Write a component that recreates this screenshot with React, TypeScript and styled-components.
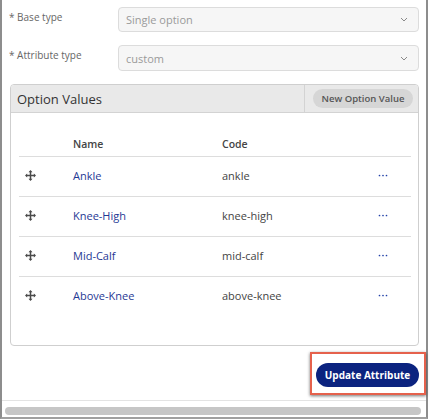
import React from "react";
import styled, { createGlobalStyle } from "styled-components";

const Global = createGlobalStyle`
  html, body { margin: 0; padding: 0; background: #fff; }
  body { font-family: "Open Sans", "Liberation Sans", sans-serif; }
  * { box-sizing: border-box; }
`;

const Frame = styled.div`
  width: 428px;
  height: 419px;
  border-left: 2px solid #8d8d8d;
  border-right: 2px solid #8d8d8d;
  border-bottom: 2px solid #a0a0a0;
  display: flex;
  flex-direction: column;
  background: #fff;
`;

const Content = styled.div`
  flex: 1;
  padding: 7px 7px 0 8px;
  display: flex;
  flex-direction: column;
`;

const FieldRow = styled.div<{ $gap?: number }>`
  display: grid;
  grid-template-columns: 108px 1fr;
  margin-bottom: ${(p) => p.$gap ?? 13}px;
`;

const Label = styled.div`
  font-size: 10px;
  color: #666;
  padding-top: 3px;
  margin-left: -1px;
`;

const SelectBox = styled.div<{ $h: number }>`
  height: ${(p) => p.$h}px;
  border: 1px solid #dcdcdc;
  border-radius: 4px;
  background: #f6f6f6;
  display: flex;
  align-items: center;
  justify-content: space-between;
  padding: 0 10px 0 7px;
  font-size: 11px;
  color: #9a9a9a;
`;

const Card = styled.div`
  border: 1px solid #cfcfcf;
  border-radius: 4px;
  height: 262px;
  display: flex;
  flex-direction: column;
  overflow: hidden;
`;

const CardHeader = styled.div`
  height: 28px;
  background: #e9e9e9;
  border-bottom: 1px solid #d3d3d3;
  display: flex;
  align-items: stretch;
`;

const CardTitle = styled.div`
  flex: 1;
  display: flex;
  align-items: center;
  padding-left: 6px;
  font-size: 13px;
  color: #333;
`;

const HeaderAction = styled.div`
  border-left: 1px solid #d3d3d3;
  display: flex;
  align-items: center;
  padding: 0 5px 0 8px;
`;

const Pill = styled.button`
  height: 19px;
  width: 100px;
  border: none;
  border-radius: 10px;
  background: #d6d6d6;
  color: #555;
  font-family: inherit;
  font-size: 9.5px;
  font-weight: 600;
  padding: 0;
  cursor: pointer;
`;

const CardBody = styled.div`
  padding: 15px 7px 0 8px;
`;

const TableRow = styled.div<{ $header?: boolean }>`
  display: grid;
  grid-template-columns: 54px 149px 156px 1fr;
  align-items: center;
  height: ${(p) => (p.$header ? 28 : 40)}px;
  padding-top: ${(p) => (p.$header ? 3 : 0)}px;
  padding-bottom: ${(p) => (p.$header ? 0 : 2)}px;
  border-top: ${(p) => (p.$header ? "none" : "1px solid #dddddd")};
  font-size: ${(p) => (p.$header ? 10.5 : 11)}px;
  font-weight: ${(p) => (p.$header ? 600 : 400)};
  color: #444;
`;

const HandleCell = styled.div`
  display: flex;
  justify-content: flex-start;
  padding-left: 6px;
`;

const NameCell = styled.div`
  color: #1f3994;
`;

const CodeCell = styled.div`
  color: #444;
`;

const MoreCell = styled.div`
  display: flex;
  align-items: center;
`;

const Footer = styled.div`
  display: flex;
  justify-content: flex-end;
  padding-top: 16px;
`;

const ButtonWrap = styled.div`
  position: relative;
`;

const Highlight = styled.div`
  position: absolute;
  top: -10px;
  left: -6px;
  right: -7px;
  bottom: -8px;
  border: 2px solid #e5614c;
  box-shadow: 0 1px 3px rgba(0, 0, 0, 0.55);
  pointer-events: none;
`;

const PrimaryButton = styled.button`
  height: 24px;
  width: 103px;
  border: none;
  border-radius: 12px;
  background: #0b237f;
  color: #fff;
  font-family: inherit;
  font-size: 10px;
  font-weight: 700;
  padding: 0;
  cursor: pointer;
`;

const ScrollTrack = styled.div`
  height: 17px;
  border-top: 1px solid #e3e3e3;
  padding: 6px 5px 2px 3px;
`;

const ScrollThumb = styled.div`
  height: 8px;
  border-radius: 4px;
  background: #c6c6c6;
`;

const Chevron = () => (
  <svg width="8" height="5" viewBox="0 0 8 5" fill="none">
    <path d="M1 1l3 3 3-3" stroke="#8a8a8a" strokeWidth="1" />
  </svg>
);

const MoveIcon = () => (
  <svg width="11" height="11" viewBox="0 0 11 11" fill="#4a4a4a">
    <rect x="4.75" y="1" width="1.5" height="9" />
    <rect x="1" y="4.75" width="9" height="1.5" />
    <path d="M5.5 0L7.5 2.2H3.5z" />
    <path d="M5.5 11L7.5 8.8H3.5z" />
    <path d="M0 5.5L2.2 3.5V7.5z" />
    <path d="M11 5.5L8.8 3.5V7.5z" />
  </svg>
);

const MoreIcon = () => (
  <svg width="10" height="3" viewBox="0 0 10 3" fill="#2342a8">
    <circle cx="1.5" cy="1.5" r="0.85" />
    <circle cx="5" cy="1.5" r="0.85" />
    <circle cx="8.5" cy="1.5" r="0.85" />
  </svg>
);

const options = [
  { name: "Ankle", code: "ankle" },
  { name: "Knee-High", code: "knee-high" },
  { name: "Mid-Calf", code: "mid-calf" },
  { name: "Above-Knee", code: "above-knee" },
];

export default function App() {
  return (
    <>
      <Global />
      <Frame>
        <Content>
          <FieldRow>
            <Label>* Base type</Label>
            <SelectBox $h={25}>
              <span>Single option</span>
              <Chevron />
            </SelectBox>
          </FieldRow>
          <FieldRow>
            <Label>* Attribute type</Label>
            <SelectBox $h={26}>
              <span>custom</span>
              <Chevron />
            </SelectBox>
          </FieldRow>
          <Card>
            <CardHeader>
              <CardTitle>Option Values</CardTitle>
              <HeaderAction>
                <Pill>New Option Value</Pill>
              </HeaderAction>
            </CardHeader>
            <CardBody>
              <TableRow $header>
                <div />
                <div>Name</div>
                <div>Code</div>
                <div />
              </TableRow>
              {options.map((o) => (
                <TableRow key={o.code}>
                  <HandleCell>
                    <MoveIcon />
                  </HandleCell>
                  <NameCell>{o.name}</NameCell>
                  <CodeCell>{o.code}</CodeCell>
                  <MoreCell>
                    <MoreIcon />
                  </MoreCell>
                </TableRow>
              ))}
            </CardBody>
          </Card>
          <Footer>
            <ButtonWrap>
              <PrimaryButton>Update Attribute</PrimaryButton>
              <Highlight />
            </ButtonWrap>
          </Footer>
        </Content>
        <ScrollTrack>
          <ScrollThumb />
        </ScrollTrack>
      </Frame>
    </>
  );
}
